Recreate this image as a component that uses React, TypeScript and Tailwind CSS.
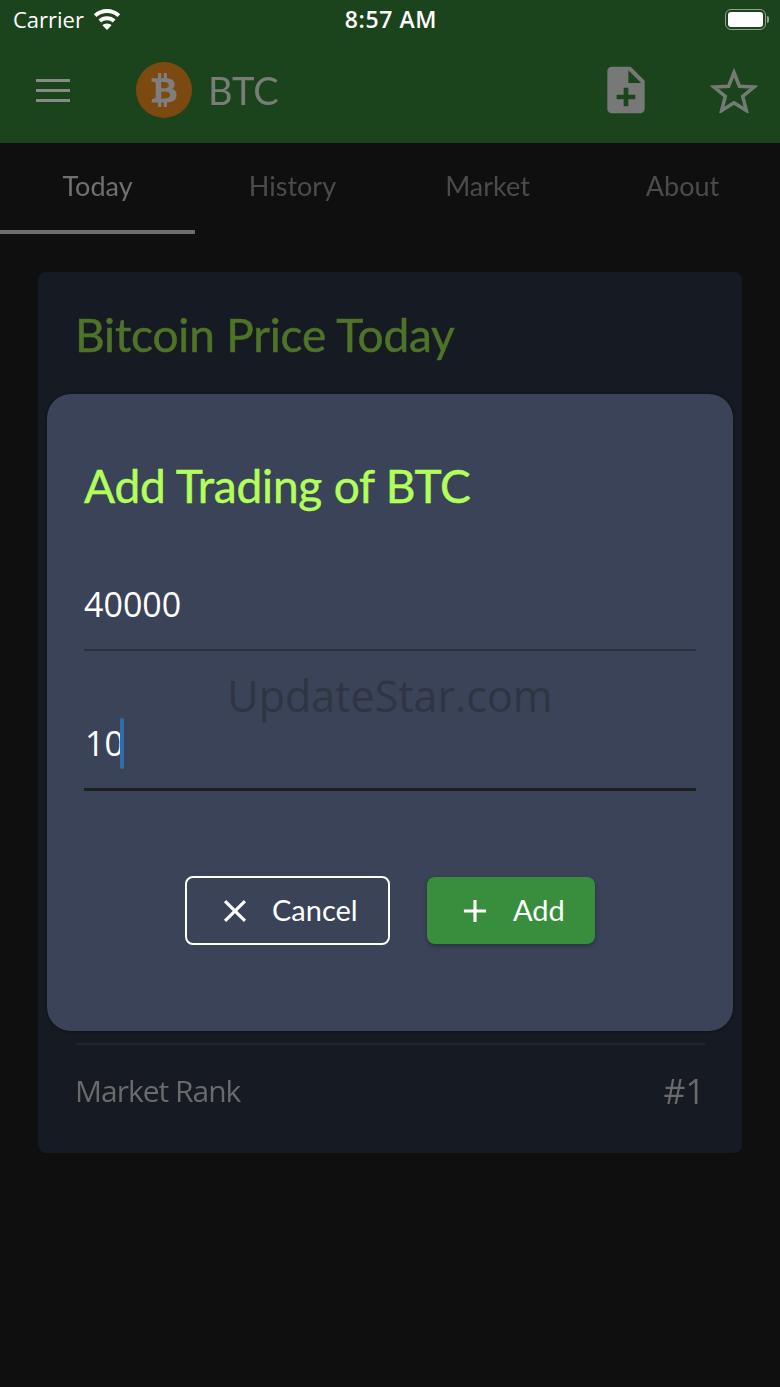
import React from "react";
import { FaBtc } from "react-icons/fa";
import { MdNoteAdd, MdClose, MdAdd } from "react-icons/md";

const heading = "font-['Lato','Inter',sans-serif]";
const body = "font-['Open_Sans','Noto_Sans',sans-serif]";

function Wifi() {
  return (
    <svg width="28" height="21" viewBox="0 0 28 21" fill="#fff">
      <path d="M14 0C8.8 0 4.3 2 .8 5.2l2.7 2.9C6.3 5.500 10 4 14 4s7.700 1.500 10.500 4.100l2.700-2.900C23.700 2 19.200 0 14 0z" />
      <path d="M14 7.200c-3.300 0-6.300 1.200-8.500 3.300l2.700 2.900C9.700 12 11.800 11.200 14 11.200s4.300.8 5.800 2.200l2.700-2.900C20.300 8.400 17.300 7.200 14 7.200z" />
      <path d="M14 14.400c-1.800 0-3.400.7-4.600 1.800L14 21l4.600-4.800c-1.200-1.100-2.800-1.800-4.600-1.800z" />
    </svg>
  );
}

function Battery() {
  return (
    <div className="flex items-center gap-[1px]">
      <div className="w-[41px] h-[21px] rounded-[6px] border-[1.5px] border-[#8fa38f] p-[2px]">
        <div className="w-full h-full rounded-[3px] bg-white" />
      </div>
      <div className="w-[2px] h-[7px] rounded-r-[2px] bg-[#8fa38f]" />
    </div>
  );
}

function StarOutline() {
  return (
    <svg width="48" height="46" viewBox="0 0 48 46" fill="none" stroke="#747a74" strokeWidth="3.500" strokeLinejoin="miter">
      <path d="M24 5.500l5.400 13.700 14.600.9-11.300 9.300 3.700 14.200L24 35.700l-12.400 7.900 3.700-14.200L4 20.100l14.600-.9z" />
    </svg>
  );
}

function Tab({ label, active }: { label: string; active?: boolean }) {
  return (
    <div
      className={`flex-1 h-full flex items-center justify-center text-[27px] ${heading} border-b-[4px] ${
        active ? "text-[#707070] border-[#6e6e6e]" : "text-[#4b4b4b] border-transparent"
      }`}
    >
      {label}
    </div>
  );
}

export default function App() {
  return (
    <div className="relative w-[780px] h-[1387px] overflow-hidden bg-[#0f0f0f]">
      <header className="h-[143px] bg-[#1c441c] flex flex-col">
        <div className={`h-[40px] grid grid-cols-3 items-center pl-[13px] pr-[11px] pb-[1px] text-white ${body}`}>
          <div className="flex items-center gap-[9px] text-[22px]">
            <span>Carrier</span>
            <Wifi />
          </div>
          <span className="text-center text-[23px] font-semibold tracking-[0.6px] whitespace-nowrap">8:57 AM</span>
          <div className="flex justify-end">
            <Battery />
          </div>
        </div>
        <div className="flex-1 flex items-center pl-[36px] pr-[22px] pb-[3px] blur-[0.5px]">
          <div className="w-[34px] flex flex-col gap-[7px]">
            <div className="h-[3px] bg-[#858c85]" />
            <div className="h-[3px] bg-[#858c85]" />
            <div className="h-[3px] bg-[#858c85]" />
          </div>
          <div className="ml-[66px] w-[56px] h-[56px] rounded-full bg-[#7c4a10] flex items-center justify-center">
            <FaBtc className="text-[#7e7e7e] text-[34px]" />
          </div>
          <span className={`ml-[16px] text-[38px] text-[#787d78] ${heading}`}>BTC</span>
          <div className="ml-auto flex items-center gap-[56px]">
            <MdNoteAdd className="text-[#787878] text-[56px]" />
            <StarOutline />
          </div>
        </div>
      </header>

      <nav className="h-[91px] flex blur-[0.5px]">
        <Tab label="Today" active />
        <Tab label="History" />
        <Tab label="Market" />
        <Tab label="About" />
      </nav>

      <section className="mx-[38px] mt-[38px] h-[881px] rounded-[8px] bg-[#151a23] flex flex-col px-[38px]">
        <h1 className={`mt-[35px] ml-[-1px] text-[46px] leading-[56px] tracking-[-0.2px] text-[#4f7327] [-webkit-text-stroke:0.5px_#4f7327] blur-[0.4px] ${heading}`}>
          Bitcoin Price Today
        </h1>
        <div className="mt-auto h-[2px] bg-[#21262e] mr-[-1px]" />
        <div className={`h-[108px] flex justify-between items-start pt-[27px] text-[30px] leading-[38px] tracking-[-1px] text-[#6a6a6a] blur-[0.5px] ${body}`}>
          <span className="ml-[-1px]">Market Rank</span>
          <span className="mr-[-1px] text-[34px] tracking-normal">#1</span>
        </div>
      </section>

      <div className="absolute left-[47px] top-[394px] w-[686px] h-[637px] rounded-[24px] bg-[#3b4358] shadow-[0_0_3px_rgba(0,0,0,0.5)] px-[37px] flex flex-col">
        <h2 className={`mt-[62px] text-[46px] leading-[60px] tracking-[-0.2px] text-[#b2ff59] [-webkit-text-stroke:0.5px_#b2ff59] ${heading}`}>
          Add Trading of BTC
        </h2>
        <div className={`mt-[65px] h-[70px] text-[34px] leading-[46px] text-white border-b-2 border-[#2a3140] ${body}`}>
          40000
        </div>
        <div className={`relative h-[140px] border-b-[3px] border-[#1f1f1f] pt-[69px] text-[34px] leading-[46px] text-white ${body}`}>
          <span className="relative ml-[1px]">
            10
            <span className="absolute right-[0px] top-[-2px] w-[4px] h-[51px] rounded-[2px] bg-[#2f6eaa]" />
          </span>
          <span className="absolute left-0 right-0 top-[15px] text-center text-[43px] leading-[60px] text-[#2f3543]">
            UpdateStar.com
          </span>
        </div>
        <div className={`mt-[85px] flex justify-center items-center gap-[37px] text-[29px] leading-[40px] text-white ${heading}`}>
          <button className="w-[205px] h-[69px] rounded-[8px] border-2 border-white flex items-center pl-[29px] gap-[18px]">
            <MdClose className="text-[38px] shrink-0" />
            <span className="pb-[1px]">Cancel</span>
          </button>
          <button className="w-[168px] h-[67px] rounded-[8px] bg-[#388e3c] shadow-[0_2px_4px_rgba(0,0,0,0.3)] flex items-center pl-[29px] gap-[19px]">
            <MdAdd className="text-[38px] shrink-0" />
            <span className="pb-[1px]">Add</span>
          </button>
        </div>
      </div>
    </div>
  );
}
